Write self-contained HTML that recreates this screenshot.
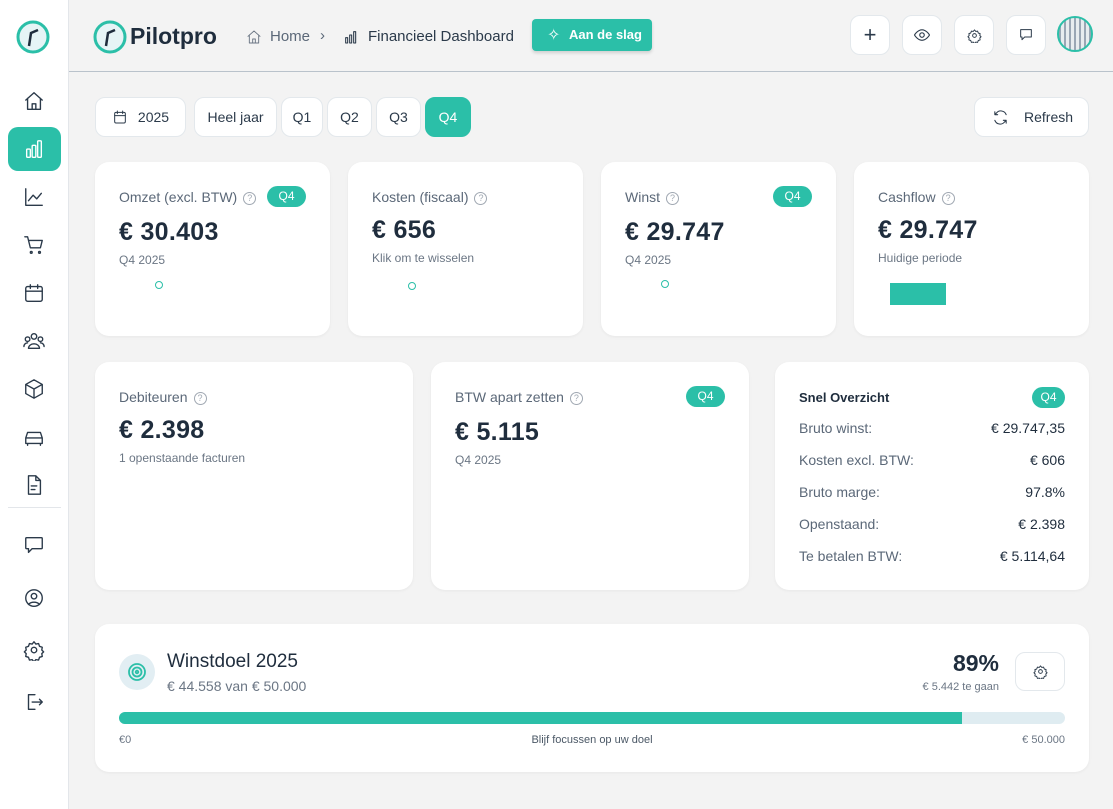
<!DOCTYPE html>
<html><head><meta charset="utf-8"><style>
*{box-sizing:border-box;margin:0;padding:0}
body{width:1113px;height:809px;background:#f3f3f3;font-family:"Liberation Sans",sans-serif;color:#1f2d3d;position:relative;overflow:hidden}
.abs{position:absolute}
.side{position:absolute;left:0;top:0;width:69px;height:809px;background:#fff;border-right:1px solid #e3e6ea}
.si{position:absolute;left:23px;width:22px;height:22px}
svg.i{fill:none;stroke:#2b3a4a;stroke-width:1.5;stroke-linecap:round;stroke-linejoin:round}
.btn{position:absolute;background:#fff;border:1px solid #e3e8ec;border-radius:10px;display:flex;align-items:center;justify-content:center;font-size:14px;color:#2b3a4a}
.card{position:absolute;background:#fff;border-radius:14px;box-shadow:0 1px 3px rgba(0,0,0,.05)}
.lbl{position:absolute;font-size:14px;color:#5b6878}
.q{display:inline-block;width:13px;height:13px;border:1.3px solid #a0a8b2;border-radius:50%;font-size:9px;color:#a0a8b2;text-align:center;line-height:11px;margin-left:6px;vertical-align:1px}
.val{position:absolute;font-size:25px;font-weight:bold;color:#1f2d3d;letter-spacing:.3px}
.sub{position:absolute;font-size:12px;color:#6b7684}
.pill{position:absolute;background:#2bbfa8;color:#fff;font-size:12px;border-radius:11px;width:39px;height:21px;text-align:center;line-height:21px}
.dot{position:absolute;width:8px;height:8px;border:1.6px solid #2bbfa8;border-radius:50%}
.row{position:absolute;left:24px;right:24px;font-size:14px;color:#5b6878}
.row b{position:absolute;right:0;top:0;font-weight:normal;color:#1f2d3d}
</style></head><body>
<div class="side">
 <svg class="abs" style="left:16px;top:20px" width="34" height="34" viewBox="0 0 34 34"><circle cx="17" cy="17" r="15" fill="#e6f4f6" stroke="#2bbfa8" stroke-width="3"/><path d="M13 26 L15 13 L22 10" stroke="#1f2d3d" stroke-width="2.5" fill="none"/></svg>
 <svg class="si i" style="top:90px" viewBox="0 0 24 24"><path d="M3 11l9-8 9 8M5 9v12h14V9M10 21v-6h4v6"/></svg>
 <div class="abs" style="left:8px;top:127px;width:53px;height:44px;background:#2bbfa8;border-radius:10px"></div>
 <svg class="si i" style="top:138px;stroke:#fff" viewBox="0 0 24 24"><rect x="4" y="12" width="4" height="9" rx="1"/><rect x="10" y="8" width="4" height="13" rx="1"/><rect x="16" y="3" width="4" height="18" rx="1"/></svg>
 <svg class="si i" style="top:186px" viewBox="0 0 24 24"><path d="M3 3v18h18M6 16l5-6 4 4 5-6"/></svg>
 <svg class="si i" style="top:234px" viewBox="0 0 24 24"><path d="M2 3h3l3 12h11l2-8H7"/><circle cx="9" cy="20" r="1"/><circle cx="18" cy="20" r="1"/></svg>
 <svg class="si i" style="top:282px" viewBox="0 0 24 24"><rect x="3" y="5" width="18" height="16" rx="2"/><path d="M3 10h18M8 3v4M16 3v4"/></svg>
 <svg class="si i" style="top:330px" viewBox="0 0 24 24"><circle cx="12" cy="7" r="3"/><circle cx="5" cy="10" r="2.5"/><circle cx="19" cy="10" r="2.5"/><path d="M6 20a6 5 0 0 1 12 0zM1 18a4 4 0 0 1 4-4M23 18a4 4 0 0 0-4-4"/></svg>
 <svg class="si i" style="top:378px" viewBox="0 0 24 24"><path d="M12 2l9 5v10l-9 5-9-5V7zM3 7l9 5 9-5M12 12v10"/></svg>
 <svg class="si i" style="top:426px" viewBox="0 0 24 24"><path d="M3 13l2-6h14l2 6v6H3zM3 13h18M5 19v2M19 19v2"/></svg>
 <svg class="si i" style="top:474px" viewBox="0 0 24 24"><path d="M6 2h8l5 5v15H6zM14 2v5h5M9 13h6M9 17h4"/></svg>
 <div class="abs" style="left:8px;top:507px;width:53px;height:1px;background:#e3e6ea"></div>
 <svg class="si i" style="top:534px" viewBox="0 0 24 24"><path d="M4 4h16a1 1 0 0 1 1 1v10a1 1 0 0 1-1 1H10l-4 4v-4H4a1 1 0 0 1-1-1V5a1 1 0 0 1 1-1z"/></svg>
 <svg class="si i" style="top:587px" viewBox="0 0 24 24"><circle cx="12" cy="12" r="9"/><circle cx="12" cy="10" r="3"/><path d="M6 19a7 5 0 0 1 12 0"/></svg>
 <svg class="si i" style="top:639px" viewBox="0 0 24 24"><circle cx="12" cy="12" r="3"/><path d="M12 3l2 2.5 3-.5 1 3 3 1-.5 3 2 2-2 2 .5 3-3 1-1 3-3-.5-2 2.5-2-2.5-3 .5-1-3-3-1 .5-3-2-2 2-2-.5-3 3-1 1-3 3 .5z"/></svg>
 <svg class="si i" style="top:691px" viewBox="0 0 24 24"><path d="M13 4H6v16h7M10 12h11M18 9l3 3-3 3"/></svg>
</div>
<!-- header -->
<div class="abs" style="left:69px;top:71px;width:1044px;height:1px;background:#b9c2cb"></div>
<svg class="abs" style="left:93px;top:20px" width="34" height="34" viewBox="0 0 34 34"><circle cx="17" cy="17" r="15" fill="#e6f4f6" stroke="#2bbfa8" stroke-width="3"/><path d="M13 26 L15 13 L22 10" stroke="#1f2d3d" stroke-width="2.5" fill="none"/></svg>
<div class="abs" style="left:130px;top:23px;font-size:23px;font-weight:bold;color:#1f2d3d">Pilotpro</div>
<svg class="abs i" style="left:246px;top:29px;stroke:#6b7684;stroke-width:1.4" width="16" height="16" viewBox="0 0 24 24"><path d="M3 11l9-8 9 8M5 9v12h14V9M10 21v-6h4v6"/></svg>
<div class="abs" style="left:270px;top:28px;font-size:15px;color:#5b6878">Home</div>
<div class="abs" style="left:320px;top:27px;font-size:15px;color:#5b6878">&#8250;</div>
<svg class="abs i" style="left:343px;top:29px;stroke-width:1.6" width="16" height="16" viewBox="0 0 24 24"><rect x="4" y="13" width="3" height="8"/><rect x="10" y="9" width="3" height="12"/><rect x="16" y="4" width="3" height="17"/></svg>
<div class="abs" style="left:368px;top:28px;font-size:15px;color:#2b3a4a">Financieel Dashboard</div>
<div class="abs" style="left:532px;top:19px;width:120px;height:32px;background:#2bbfa8;border-radius:4px;color:#fff;font-size:13px;font-weight:bold;line-height:32px;padding-left:37px;box-shadow:0 2px 3px rgba(0,0,0,.15)">Aan de slag</div>
<div class="abs" style="left:547px;top:25px;color:#fff;font-size:16px">✧</div>
<div class="btn" style="left:850px;top:15px;width:40px;height:40px;font-size:22px;font-weight:300">+</div>
<div class="btn" style="left:902px;top:15px;width:40px;height:40px"><svg class="i" width="18" height="18" viewBox="0 0 24 24"><path d="M2 12s4-7 10-7 10 7 10 7-4 7-10 7-10-7-10-7z"/><circle cx="12" cy="12" r="3"/></svg></div>
<div class="btn" style="left:954px;top:15px;width:40px;height:40px"><svg class="i" width="15" height="15" viewBox="0 0 24 24"><circle cx="12" cy="12" r="3"/><path d="M12 3l2 2.5 3-.5 1 3 3 1-.5 3 2 2-2 2 .5 3-3 1-1 3-3-.5-2 2.5-2-2.5-3 .5-1-3-3-1 .5-3-2-2 2-2-.5-3 3-1 1-3 3 .5z"/></svg></div>
<div class="btn" style="left:1006px;top:15px;width:40px;height:40px"><svg class="i" width="16" height="16" viewBox="0 0 24 24"><path d="M4 4h16v11H10l-4 4v-4H4z"/></svg></div>
<div class="abs" style="left:1057px;top:16px;width:36px;height:36px;border-radius:50%;border:2.5px solid #2bbfa8;background:repeating-linear-gradient(90deg,#9aa6b4 0 2px,#e8ecef 2px 5px)"></div>
<!-- filters -->
<div class="btn" style="left:95px;top:97px;width:91px;height:40px"><svg class="i" width="16" height="16" viewBox="0 0 24 24" style="margin-right:10px"><rect x="4" y="5" width="16" height="16" rx="2"/><path d="M4 10h16M8 3v4M16 3v4"/></svg>2025</div>
<div class="btn" style="left:194px;top:97px;width:83px;height:40px">Heel jaar</div>
<div class="btn" style="left:281px;top:97px;width:42px;height:40px">Q1</div>
<div class="btn" style="left:327px;top:97px;width:45px;height:40px">Q2</div>
<div class="btn" style="left:376px;top:97px;width:45px;height:40px">Q3</div>
<div class="btn" style="left:425px;top:97px;width:46px;height:40px;background:#2bbfa8;border-color:#2bbfa8;color:#fff">Q4</div>
<div class="btn" style="left:974px;top:97px;width:115px;height:40px;justify-content:flex-start;padding-left:17px"><svg class="i" width="17" height="17" viewBox="0 0 24 24" style="margin-right:15px"><path d="M20 8a8 8 0 0 0-14-2L4 8M4 4v4h4M4 16a8 8 0 0 0 14 2l2-2M20 20v-4h-4"/></svg>Refresh</div>
<!-- row1 -->
<div class="card" style="left:95px;top:162px;width:235px;height:174px">
 <div class="lbl" style="left:24px;top:27px">Omzet (excl. BTW)<span class="q">?</span></div>
 <div class="pill" style="left:172px;top:24px">Q4</div>
 <div class="val" style="left:24px;top:56px">€ 30.403</div>
 <div class="sub" style="left:24px;top:91px">Q4 2025</div>
 <div class="dot" style="left:60px;top:119px"></div>
</div>
<div class="card" style="left:348px;top:162px;width:235px;height:174px">
 <div class="lbl" style="left:24px;top:27px">Kosten (fiscaal)<span class="q">?</span></div>
 <div class="val" style="left:24px;top:54px">€ 656</div>
 <div class="sub" style="left:24px;top:89px">Klik om te wisselen</div>
 <div class="dot" style="left:60px;top:120px"></div>
</div>
<div class="card" style="left:601px;top:162px;width:235px;height:174px">
 <div class="lbl" style="left:24px;top:27px">Winst<span class="q">?</span></div>
 <div class="pill" style="left:172px;top:24px">Q4</div>
 <div class="val" style="left:24px;top:56px">€ 29.747</div>
 <div class="sub" style="left:24px;top:91px">Q4 2025</div>
 <div class="dot" style="left:60px;top:118px"></div>
</div>
<div class="card" style="left:854px;top:162px;width:235px;height:174px">
 <div class="lbl" style="left:24px;top:27px">Cashflow<span class="q">?</span></div>
 <div class="val" style="left:24px;top:54px">€ 29.747</div>
 <div class="sub" style="left:24px;top:89px">Huidige periode</div>
 <div class="abs" style="left:36px;top:121px;width:56px;height:22px;background:#2bbfa8"></div>
</div>
<!-- row2 -->
<div class="card" style="left:95px;top:362px;width:318px;height:228px">
 <div class="lbl" style="left:24px;top:27px">Debiteuren<span class="q">?</span></div>
 <div class="val" style="left:24px;top:54px">€ 2.398</div>
 <div class="sub" style="left:24px;top:89px">1 openstaande facturen</div>
</div>
<div class="card" style="left:431px;top:362px;width:318px;height:228px">
 <div class="lbl" style="left:24px;top:27px">BTW apart zetten<span class="q">?</span></div>
 <div class="pill" style="left:255px;top:24px">Q4</div>
 <div class="val" style="left:24px;top:56px">€ 5.115</div>
 <div class="sub" style="left:24px;top:91px">Q4 2025</div>
</div>
<div class="card" style="left:775px;top:362px;width:314px;height:228px">
 <div class="abs" style="left:24px;top:28px;font-size:13px;font-weight:bold">Snel Overzicht</div>
 <div class="pill" style="left:257px;top:25px;width:33px">Q4</div>
 <div class="row" style="top:58px">Bruto winst:<b>€ 29.747,35</b></div>
 <div class="row" style="top:90px">Kosten excl. BTW:<b>€ 606</b></div>
 <div class="row" style="top:122px">Bruto marge:<b>97.8%</b></div>
 <div class="row" style="top:154px">Openstaand:<b>€ 2.398</b></div>
 <div class="row" style="top:186px">Te betalen BTW:<b>€ 5.114,64</b></div>
</div>
<!-- goal -->
<div class="card" style="left:95px;top:624px;width:994px;height:148px">
 <div class="abs" style="left:24px;top:30px;width:36px;height:36px;border-radius:50%;background:#e2eef3"></div>
 <svg class="abs" style="left:32px;top:38px" width="20" height="20" viewBox="0 0 20 20" fill="none" stroke="#2bbfa8" stroke-width="1.8"><circle cx="10" cy="10" r="8"/><circle cx="10" cy="10" r="4.5"/><circle cx="10" cy="10" r="1.3"/></svg>
 <div class="abs" style="left:72px;top:27px;font-size:19px;color:#1f2d3d">Winstdoel 2025</div>
 <div class="abs" style="left:72px;top:54px;font-size:14px;color:#6b7684">€ 44.558 van € 50.000</div>
 <div class="abs" style="right:90px;top:26px;font-size:23px;font-weight:bold">89%</div>
 <div class="abs" style="right:90px;top:57px;font-size:11px;color:#6b7684">€ 5.442 te gaan</div>
 <div class="btn" style="left:920px;top:28px;width:50px;height:39px"><svg class="i" width="15" height="15" viewBox="0 0 24 24"><circle cx="12" cy="12" r="3"/><path d="M12 3l2 2.5 3-.5 1 3 3 1-.5 3 2 2-2 2 .5 3-3 1-1 3-3-.5-2 2.5-2-2.5-3 .5-1-3-3-1 .5-3-2-2 2-2-.5-3 3-1 1-3 3 .5z"/></svg></div>
 <div class="abs" style="left:24px;top:88px;width:946px;height:12px;border-radius:6px;background:#dfecf1;overflow:hidden"><div style="width:843px;height:12px;background:#2bbfa8"></div></div>
 <div class="abs" style="left:24px;top:110px;font-size:11px;color:#6b7684">€0</div>
 <div class="abs" style="left:0;width:994px;text-align:center;top:110px;font-size:11px;color:#4b5866">Blijf focussen op uw doel</div>
 <div class="abs" style="right:24px;top:110px;font-size:11px;color:#6b7684">€ 50.000</div>
</div>
</body></html>
